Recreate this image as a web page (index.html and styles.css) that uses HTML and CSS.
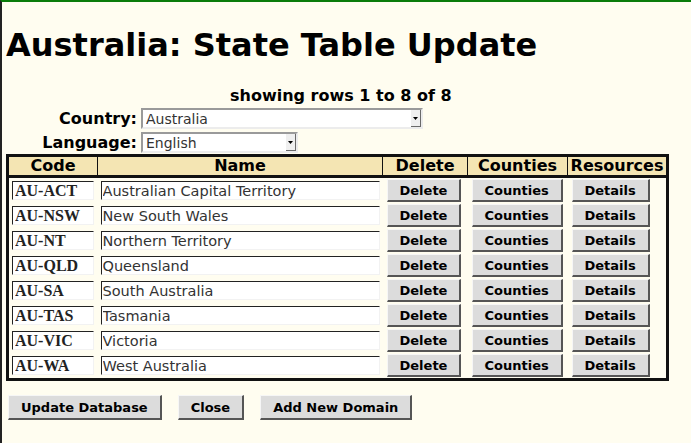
FILE: index.html
```html
<!DOCTYPE html>
<html>
<head>
    <title>State Table Update</title>
    <link rel="stylesheet" href="styles.css">
</head>
<body>
    <h1 class="title">Australia: State Table Update</h1>

    <form id="stateform" class="state-form" action="/states/" method="POST">
        <div class="row-count">showing rows 1 to 8 of 8</div>

        <div class="filter">
            <label for="country">Country:</label>
            <span class="select-wrap country">
                <select id="country" name="country">
                    <option value="AU">Australia</option>
                </select>
                <span class="arrow"><svg width="5" height="3" viewBox="0 0 5 3"><path d="M0 0h5L2.5 3z" fill="#000"/></svg></span>
            </span>
        </div>
        <div class="filter">
            <label for="language">Language:</label>
            <span class="select-wrap language">
                <select id="language" name="language">
                    <option value="en">English</option>
                </select>
                <span class="arrow"><svg width="5" height="3" viewBox="0 0 5 3"><path d="M0 0h5L2.5 3z" fill="#000"/></svg></span>
            </span>
        </div>

        <table class="states">
            <colgroup>
                <col class="col-code">
                <col class="col-name">
                <col class="col-delete">
                <col class="col-counties">
                <col class="col-resources">
            </colgroup>
            <thead>
                <tr>
                    <th>Code</th>
                    <th>Name</th>
                    <th>Delete</th>
                    <th>Counties</th>
                    <th>Resources</th>
                </tr>
            </thead>
            <tbody>
                <tr>
                    <td><input class="code" type="text" name="code[]" value="AU-ACT"></td>
                    <td><input class="name" type="text" name="name[]" value="Australian Capital Territory"></td>
                    <td class="btn-cell"><button type="button">Delete</button></td>
                    <td class="btn-cell"><button type="button">Counties</button></td>
                    <td class="btn-cell"><button type="button">Details</button></td>
                </tr>
                <tr>
                    <td><input class="code" type="text" name="code[]" value="AU-NSW"></td>
                    <td><input class="name" type="text" name="name[]" value="New South Wales"></td>
                    <td class="btn-cell"><button type="button">Delete</button></td>
                    <td class="btn-cell"><button type="button">Counties</button></td>
                    <td class="btn-cell"><button type="button">Details</button></td>
                </tr>
                <tr>
                    <td><input class="code" type="text" name="code[]" value="AU-NT"></td>
                    <td><input class="name" type="text" name="name[]" value="Northern Territory"></td>
                    <td class="btn-cell"><button type="button">Delete</button></td>
                    <td class="btn-cell"><button type="button">Counties</button></td>
                    <td class="btn-cell"><button type="button">Details</button></td>
                </tr>
                <tr>
                    <td><input class="code" type="text" name="code[]" value="AU-QLD"></td>
                    <td><input class="name" type="text" name="name[]" value="Queensland"></td>
                    <td class="btn-cell"><button type="button">Delete</button></td>
                    <td class="btn-cell"><button type="button">Counties</button></td>
                    <td class="btn-cell"><button type="button">Details</button></td>
                </tr>
                <tr>
                    <td><input class="code" type="text" name="code[]" value="AU-SA"></td>
                    <td><input class="name" type="text" name="name[]" value="South Australia"></td>
                    <td class="btn-cell"><button type="button">Delete</button></td>
                    <td class="btn-cell"><button type="button">Counties</button></td>
                    <td class="btn-cell"><button type="button">Details</button></td>
                </tr>
                <tr>
                    <td><input class="code" type="text" name="code[]" value="AU-TAS"></td>
                    <td><input class="name" type="text" name="name[]" value="Tasmania"></td>
                    <td class="btn-cell"><button type="button">Delete</button></td>
                    <td class="btn-cell"><button type="button">Counties</button></td>
                    <td class="btn-cell"><button type="button">Details</button></td>
                </tr>
                <tr>
                    <td><input class="code" type="text" name="code[]" value="AU-VIC"></td>
                    <td><input class="name" type="text" name="name[]" value="Victoria"></td>
                    <td class="btn-cell"><button type="button">Delete</button></td>
                    <td class="btn-cell"><button type="button">Counties</button></td>
                    <td class="btn-cell"><button type="button">Details</button></td>
                </tr>
                <tr>
                    <td><input class="code" type="text" name="code[]" value="AU-WA"></td>
                    <td><input class="name" type="text" name="name[]" value="West Australia"></td>
                    <td class="btn-cell"><button type="button">Delete</button></td>
                    <td class="btn-cell"><button type="button">Counties</button></td>
                    <td class="btn-cell"><button type="button">Details</button></td>
                </tr>
            </tbody>
        </table>

        <div class="actions">
            <button type="submit">Update Database</button>
            <button type="button">Close</button>
            <button type="button">Add New Domain</button>
        </div>
    </form>
</body>
</html>
```

FILE: styles.css
```css
html {
    background-color: #fffdf0;
}

body {
    font-family: "DejaVu Sans", sans-serif;
    background-color: #fffdf0;
    color: #000;
    margin: 0;
    padding: 0 4px;
    border-top: 2px solid #0a7c0a;
    border-left: 2px solid #222;
    min-height: 100vh;
    box-sizing: border-box;
}

.title {
    font-size: 32px;
    font-weight: bold;
    margin: 25px 0 0 0;
    line-height: 37px;
}

.row-count {
    font-weight: bold;
    font-size: 16px;
    margin-top: 22px;
    padding-left: 224px;
    line-height: 19px;
}

.filter {
    display: flex;
    align-items: center;
    height: 21px;
    margin-top: 3px;
}

.filter:first-of-type {
    margin-top: 1px;
}

.filter label {
    width: 131px;
    text-align: right;
    font-weight: bold;
    font-size: 16px;
    margin-right: 4px;
}

.select-wrap {
    position: relative;
    display: inline-block;
    height: 21px;
}

.select-wrap select {
    appearance: none;
    -webkit-appearance: none;
    height: 21px;
    box-sizing: border-box;
    border: 2px solid;
    border-color: #9a9a9a #ececec #ececec #9a9a9a;
    background-color: #fff;
    font-family: "DejaVu Sans", sans-serif;
    font-size: 14px;
    color: #333;
    padding: 0 3px;
    margin: 0;
    border-radius: 0;
    outline: none;
}

.country select {
    width: 282px;
}

.language select {
    width: 157px;
}

.arrow {
    position: absolute;
    top: 2px;
    right: 2px;
    width: 10px;
    height: 17px;
    box-sizing: border-box;
    background-color: #efefef;
    border-right: 1px solid #6a6a6a;
    border-bottom: 1px solid #6a6a6a;
    display: flex;
    align-items: center;
    justify-content: center;
}

.states {
    border-collapse: collapse;
    border: 3px solid #111;
    table-layout: fixed;
    width: 660px;
    margin-top: 1px;
}

.col-code { width: 90px; }
.col-name { width: 285px; }
.col-delete { width: 85px; }
.col-counties { width: 100px; }
.col-resources { width: 100px; }

.states th {
    background-color: #f4e5b3;
    border: 1px solid #111;
    border-bottom-width: 3px;
    font-size: 16px;
    font-weight: bold;
    height: 18px;
    padding: 0;
    line-height: 18px;
}

.states td {
    padding: 1px 3px;
    height: 23px;
    vertical-align: middle;
}

.states td.btn-cell {
    padding-left: 4px;
}

input[type="text"] {
    box-sizing: border-box;
    height: 19px;
    margin: 0;
    padding: 0 2px;
    border: 1px solid;
    border-color: #222 #f2f2f2 #f2f2f2 #222;
    background-color: #fff;
    outline: none;
    display: block;
}

input.code {
    width: 82px;
    font-family: "Liberation Serif", serif;
    font-weight: bold;
    font-size: 16px;
    color: #222;
}

input.name {
    width: 279px;
    padding: 0 1px;
    font-family: "DejaVu Sans", sans-serif;
    font-size: 14.5px;
    color: #333;
}

button {
    font-family: "DejaVu Sans", sans-serif;
    font-weight: bold;
    font-size: 13px;
    color: #000;
    background-color: #dcdcdc;
    height: 23px;
    padding: 0 12px;
    border-style: solid;
    border-width: 1px 2px 2px 1px;
    border-color: #f6f6f6 #555 #555 #f6f6f6;
    border-radius: 0;
    cursor: pointer;
    display: block;
}

.actions {
    display: flex;
    gap: 16px;
    margin-top: 14px;
    padding-left: 2px;
}

.actions button {
    height: 25px;
}
```
